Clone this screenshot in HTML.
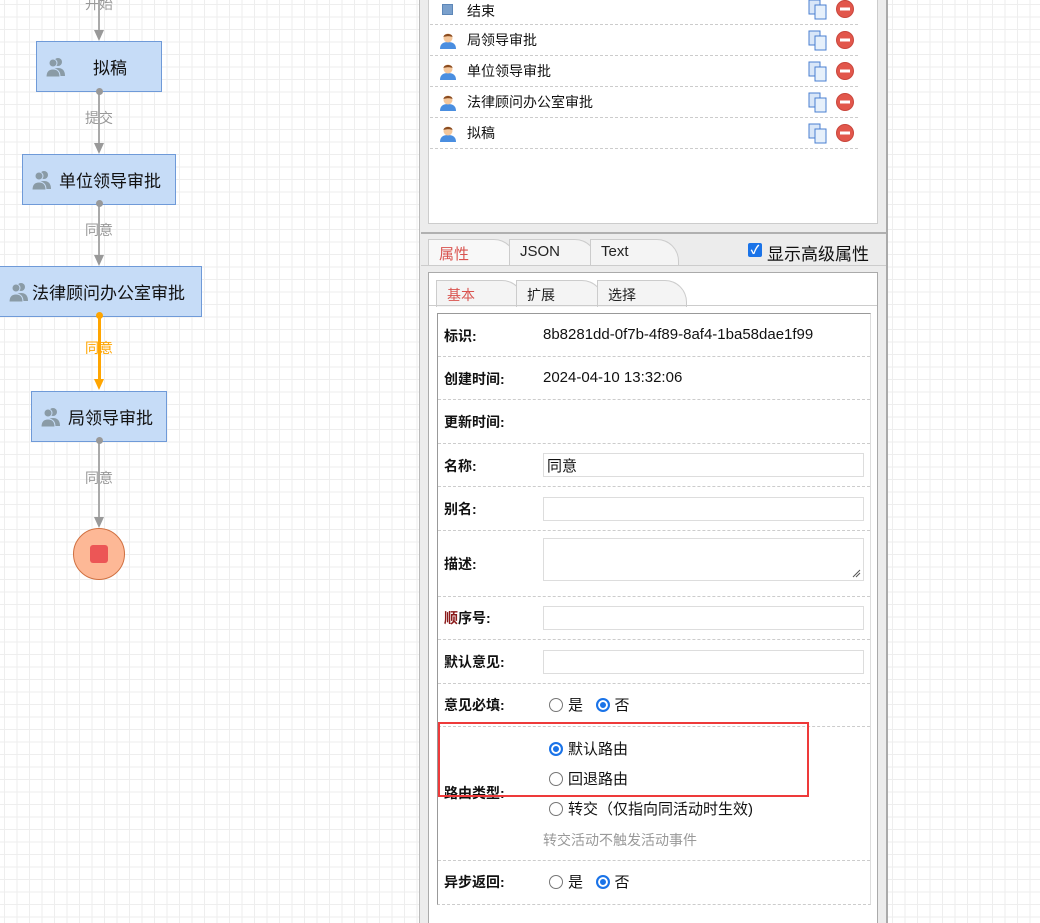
<!DOCTYPE html>
<html><head><meta charset="utf-8">
<style>
*{margin:0;padding:0;box-sizing:border-box}
html,body{width:1040px;height:923px;overflow:hidden}
body{position:relative;background:#fff;font-family:"Liberation Sans","Noto Sans CJK SC",sans-serif;font-size:14px;color:#111}
.grid{position:absolute;top:0;height:923px;background-color:#fff;
background-image:linear-gradient(to right,#eeeeee 1px,transparent 1px),linear-gradient(to bottom,#eeeeee 1px,transparent 1px);
background-size:12.5px 12.5px;background-position:4px 4px}
.a{position:absolute}
.node{position:absolute;background:#c6dcf7;border:1px solid #6f9ad8;font-size:17px;color:#111;display:flex;align-items:center;white-space:nowrap}
.node svg{margin:0 6px 0 8px}
.lbl{position:absolute;font-size:14px;color:#999;width:40px;text-align:center;left:79px}
.vl{position:absolute;left:98px;width:2px;background:#aaa}
.dot{position:absolute;width:7px;height:7px;border-radius:50%;background:#999;left:95.5px}
.arr{position:absolute;left:94px;width:0;height:0;border-left:5px solid transparent;border-right:5px solid transparent;border-top:11px solid #999}
.row{position:absolute;left:430px;width:428px;height:31px;border-bottom:1px dashed #ccc;display:flex;align-items:center}
.row .t{margin-left:37px;font-size:14px}
.tab{position:absolute;height:27px;background:#f4f4f4;border:1px solid #ccc;border-bottom:none;border-radius:0 22px 0 0;font-size:15px;padding:3px 0 0 10px;color:#222}
.tr{position:absolute;left:438px;width:432px;border-bottom:1px dashed #ccc}
.tr .k{position:absolute;left:6px;font-weight:bold;font-size:14px}
.inp{position:absolute;left:105px;width:321px;height:24px;border:1px solid #ddd;background:#fff}
.rad{display:inline-block;width:14px;height:14px;border-radius:50%;border:1px solid #767676;background:#fff;vertical-align:-2px;margin-right:5px}
.rad.on{border:2px solid #1a73e8;box-shadow:inset 0 0 0 2px #fff;background:#1a73e8}
</style></head><body>
<div class="grid" style="left:0;width:419px"></div>
<div class="grid" style="left:888px;width:152px"></div>

<div class="vl" style="top:0;height:32px"></div><div class="arr" style="top:30px"></div>
<div class="lbl" style="top:-6px">开始</div>
<div class="node" style="left:36px;top:41px;width:126px;height:51px"><svg width="22" height="20" viewBox="0 0 22 20"><g fill="#8a9ba6"><circle cx="13" cy="5" r="4"/><path d="M6 19c0-6 3-8 7-8s7 2 7 8z"/><circle cx="8" cy="6" r="4" stroke="#c6dcf7" stroke-width="1"/><path d="M1 20c0-6 3-8 7-8s7 2 7 8z" stroke="#c6dcf7" stroke-width="1"/></g></svg><span style="margin-left:20px">拟稿</span></div>
<div class="vl" style="top:91px;height:54px"></div><div class="dot" style="top:88px"></div><div class="arr" style="top:143px"></div>
<div class="lbl" style="top:108px">提交</div>
<div class="node" style="left:22px;top:154px;width:154px;height:51px"><svg width="22" height="20" viewBox="0 0 22 20"><g fill="#8a9ba6"><circle cx="13" cy="5" r="4"/><path d="M6 19c0-6 3-8 7-8s7 2 7 8z"/><circle cx="8" cy="6" r="4" stroke="#c6dcf7"/><path d="M1 20c0-6 3-8 7-8s7 2 7 8z" stroke="#c6dcf7"/></g></svg>单位领导审批</div>
<div class="vl" style="top:204px;height:54px"></div><div class="dot" style="top:200px"></div><div class="arr" style="top:255px"></div>
<div class="lbl" style="top:220px">同意</div>
<div class="node" style="left:-1px;top:266px;width:203px;height:51px"><svg width="22" height="20" viewBox="0 0 22 20"><g fill="#8a9ba6"><circle cx="13" cy="5" r="4"/><path d="M6 19c0-6 3-8 7-8s7 2 7 8z"/><circle cx="8" cy="6" r="4" stroke="#c6dcf7"/><path d="M1 20c0-6 3-8 7-8s7 2 7 8z" stroke="#c6dcf7"/></g></svg><span style="margin-left:-4px">法律顾问办公室审批</span></div>
<div class="vl" style="top:316px;height:66px;width:3px;background:#ffa500"></div><div class="dot" style="top:312px;background:#ffa500"></div>
<div class="arr" style="top:379px;border-top-color:#ffa500"></div>
<div class="lbl" style="top:338px;color:#ffa500">同意</div>
<div class="node" style="left:31px;top:391px;width:136px;height:51px"><svg width="22" height="20" viewBox="0 0 22 20"><g fill="#8a9ba6"><circle cx="13" cy="5" r="4"/><path d="M6 19c0-6 3-8 7-8s7 2 7 8z"/><circle cx="8" cy="6" r="4" stroke="#c6dcf7"/><path d="M1 20c0-6 3-8 7-8s7 2 7 8z" stroke="#c6dcf7"/></g></svg>局领导审批</div>
<div class="vl" style="top:441px;height:78px"></div><div class="dot" style="top:437px"></div><div class="arr" style="top:517px"></div>
<div class="lbl" style="top:468px">同意</div>
<div class="a" style="left:73px;top:528px;width:52px;height:52px;border-radius:50%;background:#fdb896;border:1px solid #d07040"></div>
<div class="a" style="left:90px;top:545px;width:18px;height:18px;border-radius:3px;background:#ec5656"></div>

<div class="a" style="left:419px;top:0;width:469px;height:923px;background:#ececec;border-left:1px solid #bbb;border-right:2px solid #aaa"></div>
<div class="a" style="left:428px;top:-2px;width:450px;height:226px;background:#fff;border:1px solid #ccc"></div>

<div class="row" style="top:-6px"><svg class="a" style="left:12px;top:10px" width="11" height="11"><rect width="11" height="11" fill="#5d87b8"/><rect x="1" y="1" width="9" height="9" fill="#7aa0cc"/></svg><span class="t" style="margin-top:4px">结束</span></div>

<div class="a" style="left:421px;top:232px;width:465px;height:2px;background:#b0b0b0"></div>
<div class="tab" style="left:428px;top:239px;width:88px;color:#d9534f;background:#f8f8f8">属性</div>
<div class="tab" style="left:509px;top:239px;width:88px">JSON</div>
<div class="tab" style="left:590px;top:239px;width:89px">Text</div>
<div class="a" style="left:748px;top:243px;width:14px;height:14px;background:#1a73e8;border-radius:2px;color:#fff;font-size:12px;line-height:14px;text-align:center;font-weight:bold">✓</div>
<div class="a" style="left:767px;top:240px;font-size:17px">显示高级属性</div>
<div class="a" style="left:421px;top:265px;width:465px;height:1px;background:#ccc"></div>

<div class="a" style="left:428px;top:272px;width:450px;height:651px;background:#fff;border:1px solid #aaa;border-bottom:none"></div>
<div class="tab" style="left:436px;top:280px;width:88px;color:#d9534f;font-size:14px;padding-top:4px">基本</div>
<div class="tab" style="left:516px;top:280px;width:88px;font-size:14px;padding-top:4px">扩展</div>
<div class="tab" style="left:597px;top:280px;width:90px;font-size:14px;padding-top:4px">选择</div>
<div class="a" style="left:429px;top:305px;width:448px;height:1px;background:#ccc"></div>
<div class="a" style="left:437px;top:313px;width:434px;height:592px;border:1px solid #999;border-right:1px solid #ddd;border-bottom:1px dashed #ccc"></div>

<div class="tr" style="top:314px;height:43px"><span class="k" style="top:12px">标识:</span><span class="a" style="left:105px;top:12px;font-size:15px">8b8281dd-0f7b-4f89-8af4-1ba58dae1f99</span></div>
<div class="tr" style="top:357px;height:43px"><span class="k" style="top:12px">创建时间:</span><span class="a" style="left:105px;top:12px;font-size:15px">2024-04-10 13:32:06</span></div>
<div class="tr" style="top:400px;height:44px"><span class="k" style="top:12px">更新时间:</span></div>
<div class="tr" style="top:444px;height:43px"><span class="k" style="top:12px">名称:</span><div class="inp" style="top:9px;padding:1px 3px;font-size:15px">同意</div></div>
<div class="tr" style="top:487px;height:44px"><span class="k" style="top:12px">别名:</span><div class="inp" style="top:10px"></div></div>
<div class="tr" style="top:531px;height:66px"><span class="k" style="top:23px">描述:</span><div class="inp" style="top:7px;height:43px"><svg class="a" style="right:2px;bottom:2px" width="9" height="9"><path d="M1 8L8 1M4 8L8 4" stroke="#555" stroke-width="1"/></svg></div></div>
<div class="tr" style="top:597px;height:43px"><span class="k" style="top:11px"><span style="color:#8b1a1a">顺</span>序号:</span><div class="inp" style="top:9px"></div></div>
<div class="tr" style="top:640px;height:44px"><span class="k" style="top:12px">默认意见:</span><div class="inp" style="top:10px"></div></div>
<div class="tr" style="top:684px;height:43px"><span class="k" style="top:11px">意见必填:</span><span class="a" style="left:111px;top:10px;font-size:15px"><span class="rad"></span>是&nbsp;&nbsp;&nbsp;<span class="rad on"></span>否</span></div>
<div class="tr" style="top:727px;height:134px"><span class="k" style="top:56px">路由类型:</span>
<span class="a" style="left:111px;top:11px;font-size:15px"><span class="rad on"></span>默认路由</span>
<span class="a" style="left:111px;top:41px;font-size:15px"><span class="rad"></span>回退路由</span>
<span class="a" style="left:111px;top:71px;font-size:15px"><span class="rad"></span>转交（仅指向同活动时生效)</span>
<span class="a" style="left:105px;top:103px;color:#999">转交活动不触发活动事件</span></div>
<div class="tr" style="top:861px;height:43px;border-bottom:none"><span class="k" style="top:11px">异步返回:</span><span class="a" style="left:111px;top:10px;font-size:15px"><span class="rad"></span>是&nbsp;&nbsp;&nbsp;<span class="rad on"></span>否</span></div>

<div class="a" style="left:438px;top:722px;width:371px;height:75px;border:2px solid #ee3a3a"></div>

<div class="row" style="top:25px"><svg class="a" style="left:9px;top:6px" width="18" height="18" viewBox="0 0 18 18"><path d="M1 18c0-5 3-7 8-7s8 2 8 7z" fill="#4a8ee0"/><circle cx="9" cy="7" r="4.5" fill="#f4c79c"/><path d="M4.5 6c0-4 9-4 9 0c-2-1-6-1-9 0z" fill="#8a4b1f"/></svg><span class="t">局领导审批</span></div>
<div class="row" style="top:56px"><svg class="a" style="left:9px;top:6px" width="18" height="18" viewBox="0 0 18 18"><path d="M1 18c0-5 3-7 8-7s8 2 8 7z" fill="#4a8ee0"/><circle cx="9" cy="7" r="4.5" fill="#f4c79c"/><path d="M4.5 6c0-4 9-4 9 0c-2-1-6-1-9 0z" fill="#8a4b1f"/></svg><span class="t">单位领导审批</span></div>
<div class="row" style="top:87px"><svg class="a" style="left:9px;top:6px" width="18" height="18" viewBox="0 0 18 18"><path d="M1 18c0-5 3-7 8-7s8 2 8 7z" fill="#4a8ee0"/><circle cx="9" cy="7" r="4.5" fill="#f4c79c"/><path d="M4.5 6c0-4 9-4 9 0c-2-1-6-1-9 0z" fill="#8a4b1f"/></svg><span class="t">法律顾问办公室审批</span></div>
<div class="row" style="top:118px"><svg class="a" style="left:9px;top:6px" width="18" height="18" viewBox="0 0 18 18"><path d="M1 18c0-5 3-7 8-7s8 2 8 7z" fill="#4a8ee0"/><circle cx="9" cy="7" r="4.5" fill="#f4c79c"/><path d="M4.5 6c0-4 9-4 9 0c-2-1-6-1-9 0z" fill="#8a4b1f"/></svg><span class="t">拟稿</span></div>

<svg class="a" style="left:808px;top:0" width="50" height="150" viewBox="0 0 50 150">
<defs><g id="c"><rect x="1" y="1" width="11" height="14" fill="#d8e6f8" stroke="#4a7fd0"/><rect x="7" y="6" width="11" height="14" fill="#e6f0fb" stroke="#4a7fd0"/><circle cx="37" cy="10" r="8.5" fill="#e2574c" stroke="#c9463c"/><rect x="32" y="8.5" width="10" height="3" fill="#fff"/></g></defs>
<use href="#c" y="-1"/><use href="#c" y="30"/><use href="#c" y="61"/><use href="#c" y="92"/><use href="#c" y="123"/>
</svg>
</body></html>
